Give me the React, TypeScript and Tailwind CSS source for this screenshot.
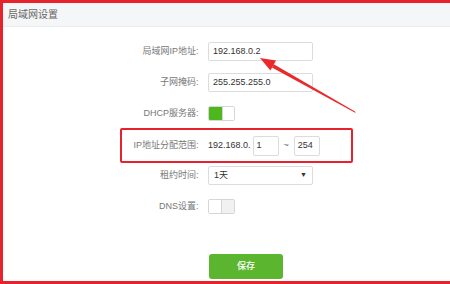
export default function App() {
  const cjk = { fontFamily: '"Liberation Sans", "Noto Sans CJK SC", sans-serif' }

  return (
    <div
      className="relative w-[450px] h-[284px] bg-white border-t-[3px] border-l-[3px] border-b-[3px] border-[#e8222c] overflow-hidden"
      style={cjk}
    >
      {/* Header */}
      <div className="h-[24px] bg-[#f5f6f7] border-b border-[#ececec] flex items-center pl-[5px]">
        <span className="text-[10px] text-[#666]">局域网设置</span>
      </div>

      {/* Form */}
      <div className="flex flex-col pt-[15px]">
        <div className="flex items-center h-[19px] ml-[108px] gap-[7px]">
          <div className="w-[90px] text-right text-[9px] text-[#777]">局域网IP地址:&nbsp;</div>
          <div className="w-[105px] h-[19px] border border-[#dcdcdc] rounded-[2px] flex items-center pl-[4px] text-[9px] text-[#333]">
            192.168.0.2
          </div>
        </div>

        <div className="flex items-center h-[19px] ml-[108px] gap-[7px] mt-[12px]">
          <div className="w-[90px] text-right text-[9px] text-[#777]">子网掩码:&nbsp;</div>
          <div className="w-[105px] h-[19px] border border-[#dcdcdc] rounded-[2px] flex items-center pl-[4px] text-[9px] text-[#333]">
            255.255.255.0
          </div>
        </div>

        <div className="flex items-center h-[19px] ml-[108px] gap-[7px] mt-[12px]">
          <div className="w-[90px] text-right text-[9px] text-[#777]">DHCP服务器:&nbsp;</div>
          <div className="w-[27px] h-[15px] border border-[#d6d6d6] rounded-[2px] flex overflow-hidden">
            <div className="w-[13px] bg-[#4fb71e]" />
            <div className="flex-1 bg-white border-l border-[#d6d6d6]" />
          </div>
        </div>

        {/* Highlighted range row */}
        <div className="flex items-center h-[35px] ml-[117px] w-[233px] border-2 border-[#e8222c] rounded-[2px] gap-[7px] mt-[5px]">
          <div className="w-[79px] text-right text-[9px] text-[#777]">IP地址分配范围:&nbsp;</div>
          <div className="flex items-center text-[9px] text-[#333]">
            <span>192.168.0.</span>
            <div className="ml-[2px] w-[26px] h-[20px] border border-[#dcdcdc] rounded-[2px] flex items-center pl-[3px]">1</div>
            <span className="mx-[5px] text-[#666]">~</span>
            <div className="w-[26px] h-[20px] border border-[#dcdcdc] rounded-[2px] flex items-center pl-[3px]">254</div>
          </div>
        </div>

        <div className="flex items-center h-[19px] ml-[108px] gap-[7px] mt-[3px]">
          <div className="w-[90px] text-right text-[9px] text-[#777]">租约时间:&nbsp;</div>
          <div className="w-[105px] h-[19px] border border-[#dcdcdc] rounded-[2px] flex items-center justify-between pl-[5px] pr-[5px] text-[9px] text-[#333]">
            <span>1天</span>
            <span className="text-[7px] text-[#333]">▼</span>
          </div>
        </div>

        <div className="flex items-center h-[19px] ml-[108px] gap-[7px] mt-[12px]">
          <div className="w-[90px] text-right text-[9px] text-[#777]">DNS设置:&nbsp;</div>
          <div className="w-[27px] h-[15px] border border-[#d6d6d6] rounded-[2px] flex overflow-hidden">
            <div className="w-[13px] bg-white border-r border-[#d6d6d6]" />
            <div className="flex-1 bg-[#f1f1f1]" />
          </div>
        </div>

        <div className="ml-[206px] mt-[36px]">
          <button className="w-[74px] h-[25px] rounded-[3px] bg-[#5cb52e] text-white text-[9px] font-medium">
            保存
          </button>
        </div>
      </div>

      {/* Annotation arrow */}
      <svg className="absolute left-[-3px] top-[-3px] pointer-events-none" width="450" height="284" viewBox="0 0 450 284">
        <polygon points="355,111.4 355.6,113 272,67.6 273.8,64.2" fill="#ea2a2a" />
        <polygon points="260,58 276,60.6 270.4,70.4" fill="#ea2a2a" />
      </svg>
    </div>
  )
}
